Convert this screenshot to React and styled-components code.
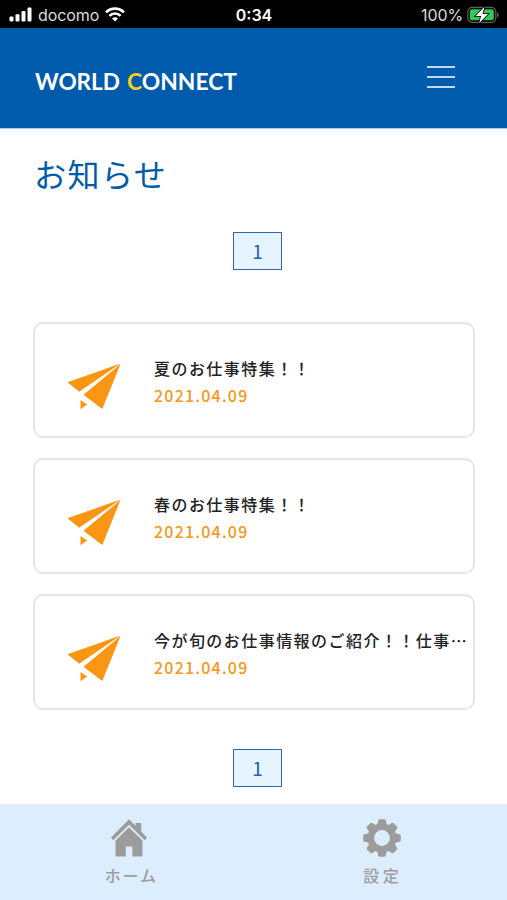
import styled, { createGlobalStyle } from "styled-components";

const news = [
  { id: 1, title: "夏のお仕事特集！！", date: "2021.04.09" },
  { id: 2, title: "春のお仕事特集！！", date: "2021.04.09" },
  {
    id: 3,
    title: "今が旬のお仕事情報のご紹介！！仕事…",
    date: "2021.04.09",
  },
];

export default function App() {
  return (
    <>
      <GlobalStyle />
      <Screen>
        <StatusBar>
          <StatusSide>
            <SignalIcon />
            <Carrier>docomo</Carrier>
            <WifiIcon />
          </StatusSide>
          <Clock>0:34</Clock>
          <StatusSide right>
            <Percent>100%</Percent>
            <BatteryIcon />
          </StatusSide>
        </StatusBar>

        <Header>
          <Logo />
          <MenuButton aria-label="menu">
            <MenuLine />
            <MenuLine />
            <MenuLine />
          </MenuButton>
        </Header>

        <Main>
          <Title>お知らせ</Title>
          <Pager>
            <PageNum>1</PageNum>
          </Pager>
          <NewsList>
            {news.map((item) => (
              <NewsItem key={item.id}>
                <PlaneIcon />
                <NewsText>
                  <NewsTitle>{item.title}</NewsTitle>
                  <NewsDate>{item.date}</NewsDate>
                </NewsText>
              </NewsItem>
            ))}
          </NewsList>
          <Pager>
            <PageNum>1</PageNum>
          </Pager>
        </Main>

        <TabBar>
          <Tab>
            <HomeIcon />
            <TabLabel>ホーム</TabLabel>
          </Tab>
          <Tab>
            <GearIcon />
            <TabLabel wide>設定</TabLabel>
          </Tab>
        </TabBar>
      </Screen>
    </>
  );
}

function Logo() {
  return (
    <LogoSvg width="206" height="34" viewBox="0 0 206 34">
      <text x="0" y="24" textLength="85" lengthAdjust="spacingAndGlyphs">
        WORLD
      </text>
      <text x="92" y="24" textLength="110" lengthAdjust="spacingAndGlyphs">
        <tspan fill="#f5cf1d">C</tspan>ONNECT
      </text>
    </LogoSvg>
  );
}

function SignalIcon() {
  return (
    <svg width="24" height="15" viewBox="0 0 24 15" fill="#fff">
      <rect x="0.5" y="9.5" width="4" height="5" rx="1" />
      <rect x="6.5" y="7.3" width="4" height="7.2" rx="1" />
      <rect x="12.5" y="4" width="4" height="10.5" rx="1" />
      <rect x="18.5" y="0.5" width="4" height="14" rx="1" />
    </svg>
  );
}

function WifiIcon() {
  return (
    <svg width="20" height="15" viewBox="0 0 20 15">
      <g fill="none" stroke="#fff" strokeWidth="2.6">
        <path d="M1 5.4a12.6 12.6 0 0 1 18 0" />
        <path d="M4.4 8.9a7.8 7.8 0 0 1 11.2 0" />
      </g>
      <path d="M10 14.5l-3-3a4.2 4.2 0 0 1 6 0z" fill="#fff" />
    </svg>
  );
}

function BatteryIcon() {
  return (
    <svg width="32" height="18" viewBox="0 0 32 18">
      <rect
        x="0.8"
        y="1.3"
        width="28"
        height="15"
        rx="4.5"
        fill="#000"
        stroke="#606060"
        strokeWidth="1.2"
      />
      <rect x="2.8" y="3.3" width="24" height="11" rx="2.6" fill="#34c759" />
      <path d="M30 6.4q1.8 .7 1.8 2.5t-1.8 2.5z" fill="#606060" />
      <path
        d="M17.5 .8L8.6 9.9h5.5l-2 7.3L21 8h-5.5z"
        fill="#fff"
        stroke="#000"
        strokeWidth="1.6"
        paintOrder="stroke"
      />
    </svg>
  );
}

function PlaneIcon() {
  return (
    <svg width="54" height="47" viewBox="0 0 54 47" fill="#fa9614">
      <path d="M53.5 0.5L0.5 19.3L12.2 28.7z" />
      <path d="M53.5 1L16.5 31.7L35.3 46z" />
      <path d="M13.5 37V46.3L20.2 41.5z" />
    </svg>
  );
}

function HomeIcon() {
  return (
    <svg width="38" height="40" viewBox="1 0 38 40" fill="#9c9c9c">
      <path d="M19 1.2L25.6 7.8V5H31.2V13.4L37 19.5L34.8 22.3L19 6.8L3.2 22.3L1 19.5z" />
      <path d="M19 9.2L32.5 22.5V37Q32.5 38.6 31 38.6H22.4V28.5H15.8V38.6H7Q5.5 38.6 5.5 37V22.5z" />
    </svg>
  );
}

function GearIcon() {
  return (
    <svg width="40" height="40" viewBox="-21 -20 40 40">
      <g fill="#9c9c9c">
        {[0, 45, 90, 135, 180, 225, 270, 315].map((deg) => (
          <path
            key={deg}
            d="M-5.2 -11L-3.8 -17.4Q-3.5 -18.8 -2.2 -18.8H2.2Q3.5 -18.8 3.8 -17.4L5.2 -11z"
            transform={`rotate(${deg})`}
          />
        ))}
      </g>
      <circle r="11.2" fill="none" stroke="#9c9c9c" strokeWidth="6.6" />
    </svg>
  );
}

const GlobalStyle = createGlobalStyle`
  * {
    box-sizing: border-box;
    margin: 0;
    padding: 0;
  }

  body {
    background-color: #fff;
    font-family: "Noto Sans CJK JP", sans-serif;
  }
`;

const Screen = styled.div`
  display: flex;
  flex-direction: column;
  width: 507px;
  height: 900px;
  overflow: hidden;
`;

const StatusBar = styled.div`
  display: grid;
  grid-template-columns: 1fr auto 1fr;
  align-items: center;
  height: 28px;
  padding: 1px 8px 0 9px;

  background-color: #000;
  color: #fff;
  font-family: Inter, "Liberation Sans", sans-serif;
`;

const StatusSide = styled.div`
  display: flex;
  align-items: center;
  justify-content: ${({ right }) => (right ? "flex-end" : "flex-start")};
  gap: ${({ right }) => (right ? "4px" : "5px")};
`;

const Carrier = styled.span`
  width: 62px;
  color: #dcdcdc;
  font-size: 16px;
  line-height: 20px;
  letter-spacing: -0.1px;
`;

const Percent = styled.span`
  color: #dcdcdc;
  font-size: 16px;
  line-height: 20px;
  letter-spacing: -0.1px;
`;

const Clock = styled.span`
  font-size: 16px;
  font-weight: 600;
  line-height: 20px;
`;

const Header = styled.header`
  display: flex;
  align-items: flex-start;
  justify-content: space-between;
  flex-shrink: 0;
  height: 101px;
  padding: 38px 52px 0 35px;

  background-color: #005bac;
  border-bottom: 1px solid #a9cbe8;
`;

const LogoSvg = styled.svg`
  overflow: visible;
  fill: #fff;
  font-family: Lato, sans-serif;
  font-size: 22.5px;
  font-weight: 700;
`;

const MenuButton = styled.button`
  display: flex;
  flex-direction: column;
  gap: 8px;
  width: 28px;
  border: none;

  background: none;
  cursor: pointer;
`;

const MenuLine = styled.span`
  height: 2px;
  background-color: #c3dbf0;
`;

const Main = styled.main`
  flex: 1;
  min-height: 0;
  padding: 20px 32px 0 33px;
`;

const Title = styled.h1`
  height: 83px;
  padding-left: 1px;

  color: #005bac;
  font-size: 32px;
  font-weight: 400;
  line-height: 48px;
  letter-spacing: 1.5px;
`;

const Pager = styled.div`
  display: flex;
  justify-content: center;
  padding-left: 7px;
`;

const PageNum = styled.span`
  width: 49px;
  height: 38px;
  border: 1.5px solid #2f66b5;

  background-color: #e6f4ff;
  color: #2464b0;
  font-size: 19px;
  line-height: 35px;
  text-align: center;
`;

const NewsList = styled.ul`
  display: flex;
  flex-direction: column;
  gap: 20px;
  padding: 52px 0 39px;
  list-style: none;
`;

const NewsItem = styled.li`
  display: flex;
  height: 116px;
  padding: 39px 0 0 32px;
  border: 2px solid #e6e6e6;
  border-radius: 10px;

  svg {
    flex-shrink: 0;
  }
`;

const NewsText = styled.div`
  flex: 1;
  min-width: 0;
  margin: -8px 0 0 33px;
`;

const NewsTitle = styled.p`
  color: #222;
  font-size: 16px;
  font-weight: 500;
  line-height: 27px;
  letter-spacing: 1.45px;
  white-space: nowrap;
`;

const NewsDate = styled.p`
  color: #fa9614;
  font-size: 16px;
  font-weight: 500;
  line-height: 27px;
  letter-spacing: 1.2px;
`;

const TabBar = styled.nav`
  display: flex;
  flex-shrink: 0;
  height: 96px;
  padding-left: 4px;
  border-top: 1px solid #e8eef3;

  background-color: #dcedfe;
`;

const Tab = styled.a`
  display: flex;
  flex-direction: column;
  align-items: center;
  flex: 1;
  padding-top: 13px;
`;

const TabLabel = styled.span`
  margin: 5px 0 0 3px;

  color: #9c9c9c;
  font-size: 16px;
  font-weight: 500;
  line-height: 24px;
  letter-spacing: ${({ wide }) => (wide ? "3.5px" : "1.8px")};
`;
